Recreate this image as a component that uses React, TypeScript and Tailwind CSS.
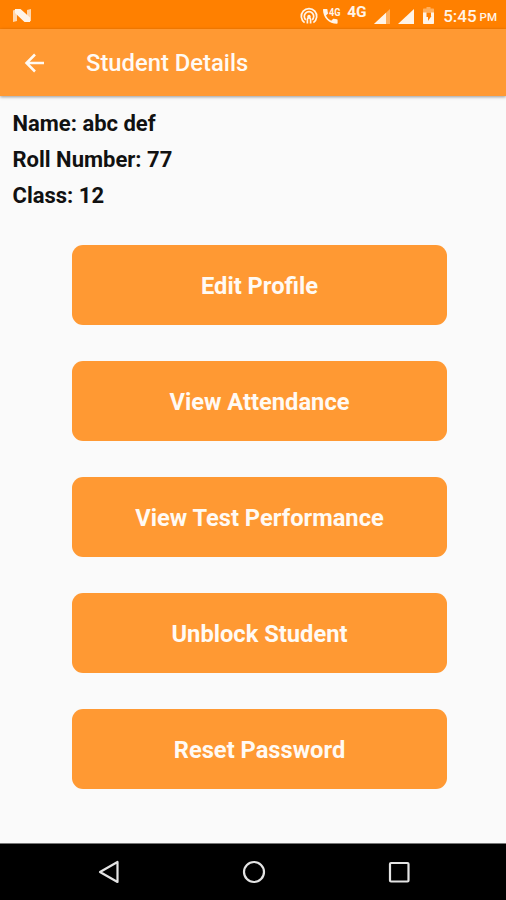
const details = [
  { label: "Name", value: "abc def" },
  { label: "Roll Number", value: "77" },
  { label: "Class", value: "12" },
];

const actions = [
  "Edit Profile",
  "View Attendance",
  "View Test Performance",
  "Unblock Student",
  "Reset Password",
];

function StatusBar() {
  return (
    <div className="flex h-[29px] items-start bg-[#ff8000] pl-[13px] pr-[9px] text-[#fff4e8]">
      <svg className="mt-2 h-[15px] w-[19px]" viewBox="0 0 19 15">
        <path d="M0 2.500 4 1v12l-4 1z" fill="currentColor" opacity=".75" />
        <path d="M14 2l4-1v12l-4 1z" fill="currentColor" opacity=".75" />
        <path d="M2 1h5.500L17 9.500V14h-5.500L2 5z" fill="currentColor" />
      </svg>

      <div className="ml-auto flex items-start">
        {/* Hotspot */}
        <svg
          className="mt-[7px] h-[18px] w-[18px]"
          viewBox="0 0 18 18"
          fill="none"
          stroke="currentColor"
          strokeWidth="1.700"
        >
          <path d="M4.600 15.600A7.700 7.700 0 1 1 13.400 15.600" />
          <path d="M5.800 12.800A4.700 4.700 0 1 1 12.200 12.800" />
          <circle cx="9" cy="9.400" r="1.700" fill="currentColor" stroke="none" />
          <path d="M7.400 16.500V12.500a1.600 1.600 0 0 1 3.200 0v4" />
        </svg>

        {/* VoLTE call */}
        <svg className="ml-1 mt-[6px] h-[19px] w-[20px]" viewBox="0 0 20 19">
          <path
            d="M1.600 3h3.200c.4 0 .7.3.7.7 0 1.100.2 2.200.5 3.200.1.300 0 .6-.2.800L4 9.600c1.300 2.500 2.900 4.100 5.200 5.200l1.800-1.900c.2-.2.500-.3.800-.2 1 .3 2.100.500 3.100.5.4 0 .7.3.7.7V17c0 .5-.3.800-.7.800C7 17.800 1 11.500 1 3.700c0-.4.2-.7.600-.7z"
            fill="currentColor"
          />
          <text
            x="7"
            y="9.500"
            fill="currentColor"
            fontSize="10"
            fontWeight="700"
            fontFamily="Roboto, sans-serif"
            textLength="11.500"
            lengthAdjust="spacingAndGlyphs"
          >
            4G
          </text>
        </svg>

        <span className="ml-[5px] mt-[4px] w-[21px] text-[15.500px] font-bold leading-4">4G</span>

        {/* Signal */}
        <svg className="ml-[6px] mt-[9px] h-[15px] w-[16px]" viewBox="0 0 16 15">
          <path d="M16 0v15H0z" fill="currentColor" opacity=".4" />
          <path d="M12 3.700V15H0z" fill="currentColor" />
        </svg>
        <svg className="ml-[8px] mt-[9px] h-[15px] w-[16px]" viewBox="0 0 16 15">
          <path d="M16 0v15H0z" fill="currentColor" />
        </svg>

        {/* Battery */}
        <svg className="ml-[9px] mt-[7px] h-[17px] w-[11px]" viewBox="0 0 11 17">
          <path d="M3.500 0h4v1.600H10c.6 0 1 .4 1 1V6H0V2.600c0-.6.400-1 1-1h2.500z" fill="currentColor" opacity=".4" />
          <path d="M0 5.500h11V16c0 .6-.4 1-1 1H1c-.6 0-1-.4-1-1z" fill="currentColor" />
          <path d="M3.500 5.500h4.500v3.500h.5L5 14V10H3.500z" fill="#ff8000" />
        </svg>

        <span className="ml-[9px] mt-[6px] text-[17px] font-medium leading-5">5:45</span>
        <span className="ml-[3px] mt-[9px] text-[11.500px] font-medium leading-4">PM</span>
      </div>
    </div>
  );
}

function Toolbar() {
  return (
    <header className="relative flex h-[67px] items-center bg-[#ff9933] pl-[22px] text-[#fffaf4] shadow-[0_1px_3px_rgba(0,0,0,0.4)]">
      <svg className="h-6 w-6" viewBox="0 0 24 24" fill="none" stroke="currentColor" strokeWidth="2.500">
        <path d="M22 12H4.500M13 3.500 4.500 12l8.500 8.500" />
      </svg>
      <h1 className="ml-10 pt-px text-[23.800px] font-medium leading-8">Student Details</h1>
    </header>
  );
}

function NavigationBar() {
  return (
    <nav className="flex h-[57px] items-center justify-between border-t border-[#777] bg-black pl-[97px] pr-[95px] text-[#e4e4e4]">
      <svg className="h-6 w-6" viewBox="0 0 24 24" fill="none" stroke="currentColor" strokeWidth="2.200" strokeLinejoin="round">
        <path d="M20.500 2v20L3 12z" />
      </svg>
      <svg className="h-6 w-6" viewBox="0 0 24 24" fill="none" stroke="currentColor" strokeWidth="2.200">
        <circle cx="12" cy="12" r="10" />
      </svg>
      <svg className="h-6 w-6" viewBox="0 0 24 24" fill="none" stroke="currentColor" strokeWidth="2.200">
        <rect x="3" y="3" width="18.500" height="18.500" rx="1" />
      </svg>
    </nav>
  );
}

export default function App() {
  return (
    <div className="flex h-[900px] w-[506px] flex-col overflow-hidden bg-[#fafafa] font-['Roboto',sans-serif]">
      <StatusBar />
      <Toolbar />

      <main className="flex-1">
        <div className="pl-[12.500px] pt-[10px]">
          {details.map((item) => (
            <p key={item.label} className="h-9 text-[22px] font-bold leading-9 text-[#111]">
              {item.label}: {item.value}
            </p>
          ))}
        </div>

        <div className="ml-[72px] mt-[31px] flex w-[375px] flex-col gap-9">
          {actions.map((action) => (
            <button
              key={action}
              className="h-20 rounded-[11px] bg-[#ff9933] pt-[3px] text-[23.700px] font-bold text-[#fffaf4]"
            >
              {action}
            </button>
          ))}
        </div>
      </main>

      <NavigationBar />
    </div>
  );
}
